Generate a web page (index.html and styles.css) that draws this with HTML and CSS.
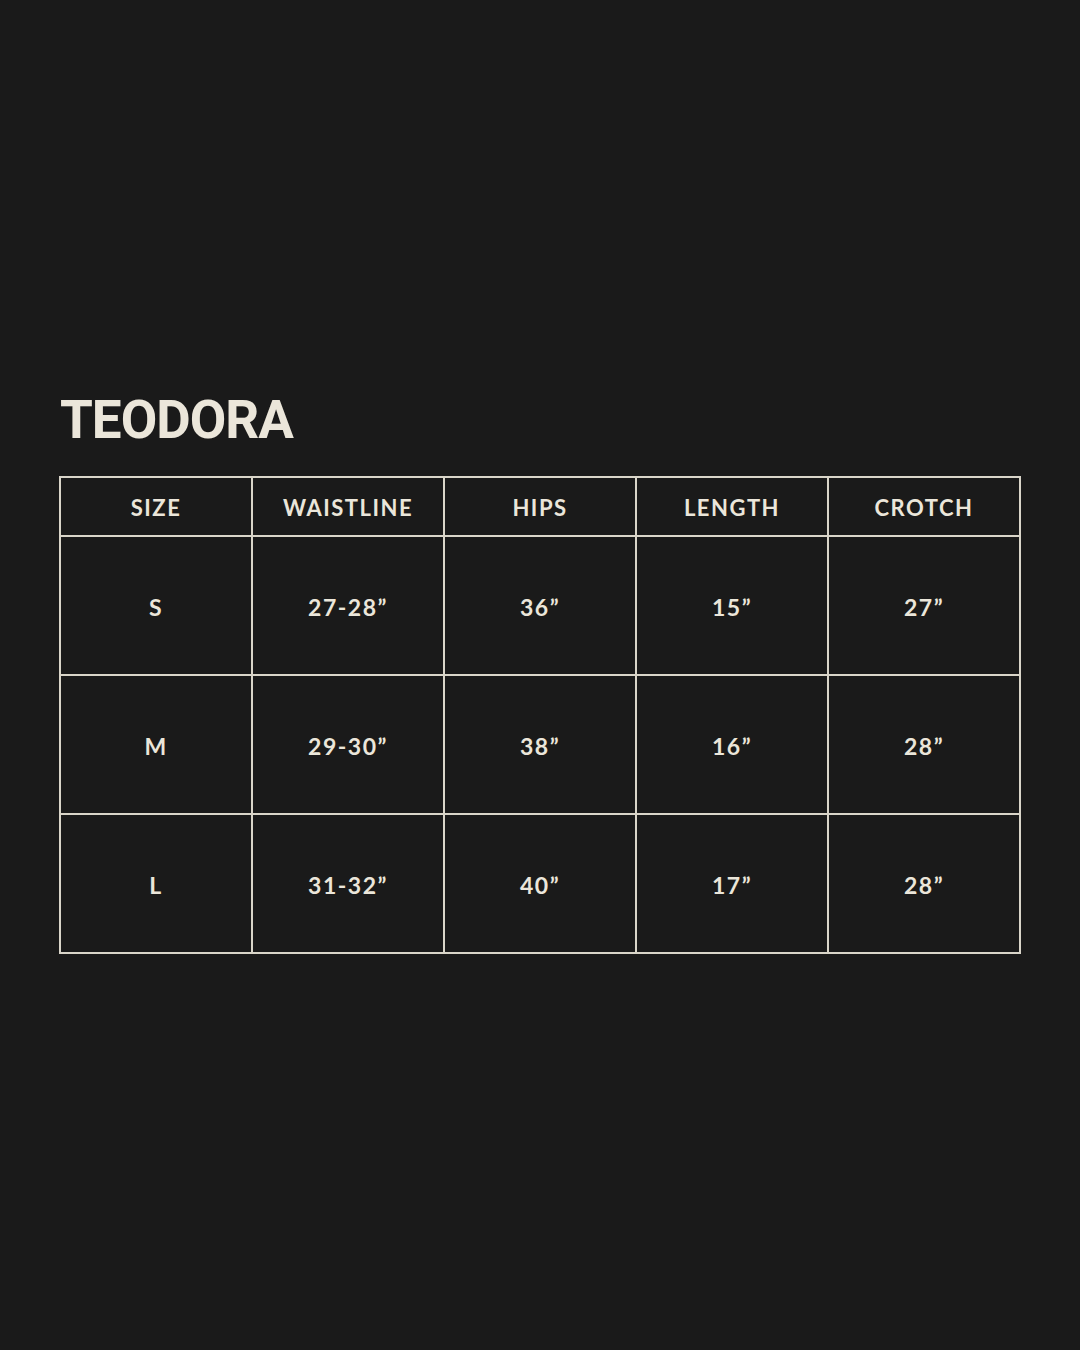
FILE: index.html
```html
<!DOCTYPE html>
<html>
<head>
<meta charset="utf-8">
<link rel="stylesheet" href="styles.css">
</head>
<body>
<main class="page">
  <h1 class="title">TEODORA</h1>
  <table class="chart">
    <thead>
      <tr><th>SIZE</th><th>WAISTLINE</th><th>HIPS</th><th>LENGTH</th><th>CROTCH</th></tr>
    </thead>
    <tbody>
      <tr><td>S</td><td>27-28”</td><td>36”</td><td>15”</td><td>27”</td></tr>
      <tr><td>M</td><td>29-30”</td><td>38”</td><td>16”</td><td>28”</td></tr>
      <tr><td>L</td><td>31-32”</td><td>40”</td><td>17”</td><td>28”</td></tr>
    </tbody>
  </table>
</main>
</body>
</html>
```
FILE: styles.css
```css
html, body {
  margin: 0;
  padding: 0;
  background: #1a1a1a;
}
.page {
  width: 1080px;
  height: 1350px;
  box-sizing: border-box;
  padding: 390px 0 0 59px;
  color: #ebe6da;
  font-family: Lato, "Open Sans", "Liberation Sans", sans-serif;
}
.title {
  margin: 0 0 26px 1px;
  font-family: Roboto, Lato, sans-serif;
  font-size: 53px;
  line-height: 60px;
  font-weight: 700;
  letter-spacing: -1px;
}
.chart {
  border-collapse: collapse;
  table-layout: fixed;
  width: 962px;
}
.chart th, .chart td {
  border: 2px solid #d9d5c9;
  text-align: center;
  padding: 2px 0 0 0;
  font-weight: 700;
}
.chart th {
  height: 55px;
  font-size: 22px;
  letter-spacing: 1.5px;
}
.chart td {
  height: 135px;
  font-size: 23px;
  letter-spacing: 1.5px;
}
```
